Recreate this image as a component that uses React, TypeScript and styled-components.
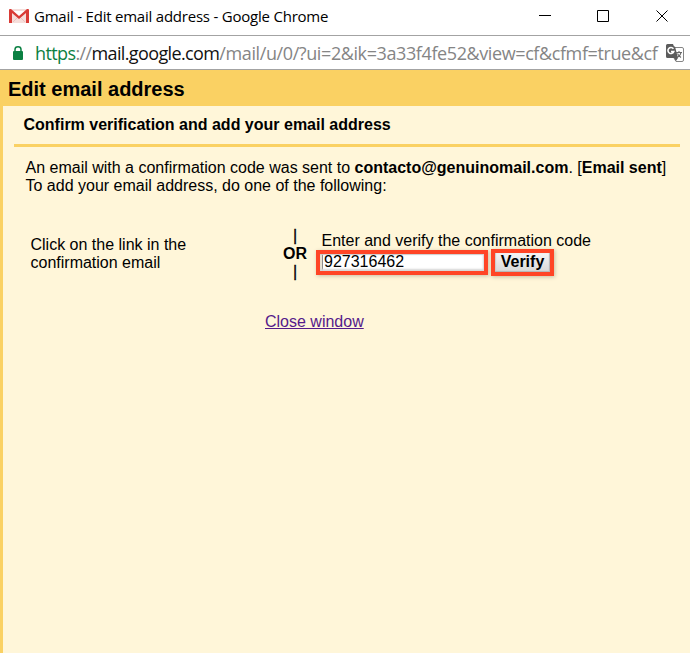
import React from 'react';
import styled, { createGlobalStyle } from 'styled-components';

const GlobalStyle = createGlobalStyle`
  * { box-sizing: border-box; }
  html, body { margin: 0; padding: 0; overflow: hidden; }
  body { background: #fff6d9; color: #000; font: 16px/18px "Liberation Sans", Arial, sans-serif; }
`;

const Window = styled.div`
  width: 690px;
  height: 653px;
  display: flex;
  flex-direction: column;
  overflow: hidden;
`;

const TitleBar = styled.header`
  height: 35px;
  flex: none;
  display: flex;
  align-items: center;
  padding: 0 22px 4px 9px;
  background: #fff;

  > svg { margin-top: 2px; }
`;

const WindowTitle = styled.span`
  margin-left: 5px;
  flex: 1;
  white-space: nowrap;
  font: 15px/20px "Open Sans", "Segoe UI", sans-serif;
  letter-spacing: -0.22px;
`;

const WindowControls = styled.div`
  display: flex;
  align-items: center;
  gap: 47px;

  svg { display: block; }
  svg:first-child { margin-right: -1px; }
`;

const AddressBar = styled.div`
  height: 35px;
  flex: none;
  display: flex;
  align-items: center;
  padding: 0 5px 0 12px;
  background: #fff;
  border-top: 1px solid #a3a3a3;
  border-bottom: 1px solid #a3a3a3;
`;

const Url = styled.div`
  width: 623px;
  margin: 0 8px 0 11px;
  white-space: nowrap;
  font: 18px/24px "Open Sans", "Segoe UI", sans-serif;
  letter-spacing: -0.62px;
  color: #858585;
`;

const Scheme = styled.span`
  color: #0b8043;
`;

const Host = styled.span`
  color: #111;
`;

const Path = styled.span`
  letter-spacing: -0.4px;
`;

const PageHeader = styled.h1`
  height: 36px;
  flex: none;
  margin: 0;
  padding: 1px 8px 0;
  background: #fad163;
  font-size: 20px;
  line-height: 36px;
  font-weight: bold;
`;

const Panel = styled.main`
  flex: 1;
  padding: 0 10px 0 11px;
  background: #fff6d9;
  border-left: 3px solid #fad163;
`;

const Heading = styled.h2`
  height: 41px;
  margin: 0;
  padding: 10px 9.5px 0;
  border-bottom: 3px solid #fad163;
  font-size: 16px;
  line-height: 18px;
`;

const Message = styled.p`
  margin: 12px 0 0;
  padding-left: 11.5px;
  white-space: nowrap;
`;

const Choices = styled.section`
  display: grid;
  grid-template-columns: 249px 38.5px 1fr;
  margin-top: 33px;
  padding-left: 16px;
`;

const LinkChoice = styled.p`
  width: 180px;
  margin: 8px 0 0 0.5px;
`;

const Separator = styled.div`
  display: flex;
  flex-direction: column;
  align-items: center;
  width: 30px;
  margin-left: 1px;
  font-weight: bold;
`;

const Bar = styled.span`
  font-weight: normal;
  -webkit-text-stroke: 0.3px #000;
  margin: -1px 0 1px;
`;

const Or = styled.span`
  margin: -1px 0 1px;
`;

const CodeChoice = styled.div`
  padding-top: 4px;
`;

const CodeLabel = styled.label`
  display: block;
  margin-left: 4px;
  white-space: nowrap;
`;

const CodeForm = styled.div`
  display: flex;
  align-items: flex-start;
  gap: 3px;
  margin-left: -1.5px;
`;

const CodeInput = styled.input`
  width: 172px;
  height: 25px;
  margin: 0;
  padding: 0 4px 2px;
  border: 4px solid #ff4526;
  border-radius: 0;
  outline: 0;
  background: linear-gradient(to right, #e9e3d3 2px, #8d8d8d 2px, #8d8d8d 3px, transparent 3px) padding-box, #fff;
  box-shadow: inset -1px -2px 2px #d6d6d6, inset 0 1px 1px #ccc, 1px 1px 4px #c8bea4;
  color: #000;
  font: 16px/18px "Liberation Sans", Arial, sans-serif;
`;

const VerifyButton = styled.button`
  width: 63px;
  height: 27px;
  margin-top: -1px;
  padding: 0 0 1px;
  border: 4px solid #ff4526;
  background: linear-gradient(#f5f5f5, #d8d8d8);
  box-shadow: inset -1px -1px 1px #b5b5b5, inset 1px 0 1px #ccc, 1px 1px 4px #c8bea4;
  color: #000;
  font: bold 16px/16px "Liberation Sans", Arial, sans-serif;
`;

const CloseRow = styled.div`
  margin-top: 31px;
  padding-left: 251px;

  a { color: #551a8b; text-decoration: underline; }
`;

const GmailIcon = () => (
  <svg width="20" height="15" viewBox="0 0 20 15" aria-hidden="true">
    <path fill="#f6dedb" d="M1 0h18v14H1z" />
    <path fill="#fff" d="M4 2h12v1l-6 5-6-5z" />
    <path d="M4 13l5-5M16 13l-5-5" stroke="#edc1bd" />
    <path fill="#d93b36" d="M0 1Q0 0 1 0h1l8 7 8-7h1q1 0 1 1v13h-3V4l-7 6-7-6v10H0z" />
  </svg>
);

const LockIcon = () => (
  <svg width="12" height="14" viewBox="0 0 12 14" aria-hidden="true">
    <path fill="none" stroke="#0b8043" strokeWidth="1.5" d="M3 6V3.5C3 1.8 4.2.8 6 .8s3 1 3 2.7V6" />
    <rect x="1" y="5" width="10" height="9" rx="1" fill="#0b8043" />
  </svg>
);

const TranslateIcon = () => (
  <svg width="18" height="18" viewBox="0 0 18 18" aria-hidden="true">
    <path d="M7 3.5h9q1.5 0 1.5 1.5v11q0 1.5-1.5 1.5h-6L8 14" fill="#fff" stroke="#858585" />
    <path d="M1.5 0H7l1 2.5h1L12 14l-2 3-2-3H1.5Q0 14 0 12.5v-11Q0 0 1.5 0z" fill="#5c5c5c" />
    <path d="M7.4 4.8A3 3 0 1 0 7.8 7.5H5" fill="none" stroke="#fff" strokeWidth="1.6" />
    <path d="M10 8.5h6M13 7v1.5M15 8.5c-.5 2.5-2 4-4 5M11.5 9.5c.7 1.8 1.8 3 3.5 4" fill="none" stroke="#686868" strokeWidth="1.1" />
  </svg>
);

export default function App() {
  return (
    <>
      <GlobalStyle />
      <Window>
        <TitleBar>
          <GmailIcon />
          <WindowTitle>Gmail - Edit email address - Google Chrome</WindowTitle>
          <WindowControls>
            <svg width="12" height="12"><path d="M0 5.5h12" stroke="#000" /></svg>
            <svg width="12" height="12"><path d="M.5.5h11v11H.5z" fill="none" stroke="#000" /></svg>
            <svg width="12" height="12"><path d="M.5.5l11 11M11.5.5l-11 11" stroke="#000" /></svg>
          </WindowControls>
        </TitleBar>
        <AddressBar>
          <LockIcon />
          <Url>
            <Scheme>https</Scheme>://<Host>mail.google.com</Host>
            <Path>/mail/u/0/?ui=2&amp;ik=3a33f4fe52&amp;view=cf&amp;cfmf=true&amp;cf</Path>
          </Url>
          <TranslateIcon />
        </AddressBar>
        <PageHeader>Edit email address</PageHeader>
        <Panel>
          <Heading>Confirm verification and add your email address</Heading>
          <Message>
            An email with a confirmation code was sent to <b>contacto@genuinomail.com</b>. [<b>Email sent</b>]
            <br />
            To add your email address, do one of the following:
          </Message>
          <Choices>
            <LinkChoice>Click on the link in the confirmation email</LinkChoice>
            <Separator>
              <Bar>|</Bar>
              <Or>OR</Or>
              <Bar>|</Bar>
            </Separator>
            <CodeChoice>
              <CodeLabel htmlFor="code">Enter and verify the confirmation code</CodeLabel>
              <CodeForm>
                <CodeInput id="code" defaultValue="927316462" />
                <VerifyButton type="button">Verify</VerifyButton>
              </CodeForm>
            </CodeChoice>
          </Choices>
          <CloseRow>
            <a href="#close">Close window</a>
          </CloseRow>
        </Panel>
      </Window>
    </>
  );
}
